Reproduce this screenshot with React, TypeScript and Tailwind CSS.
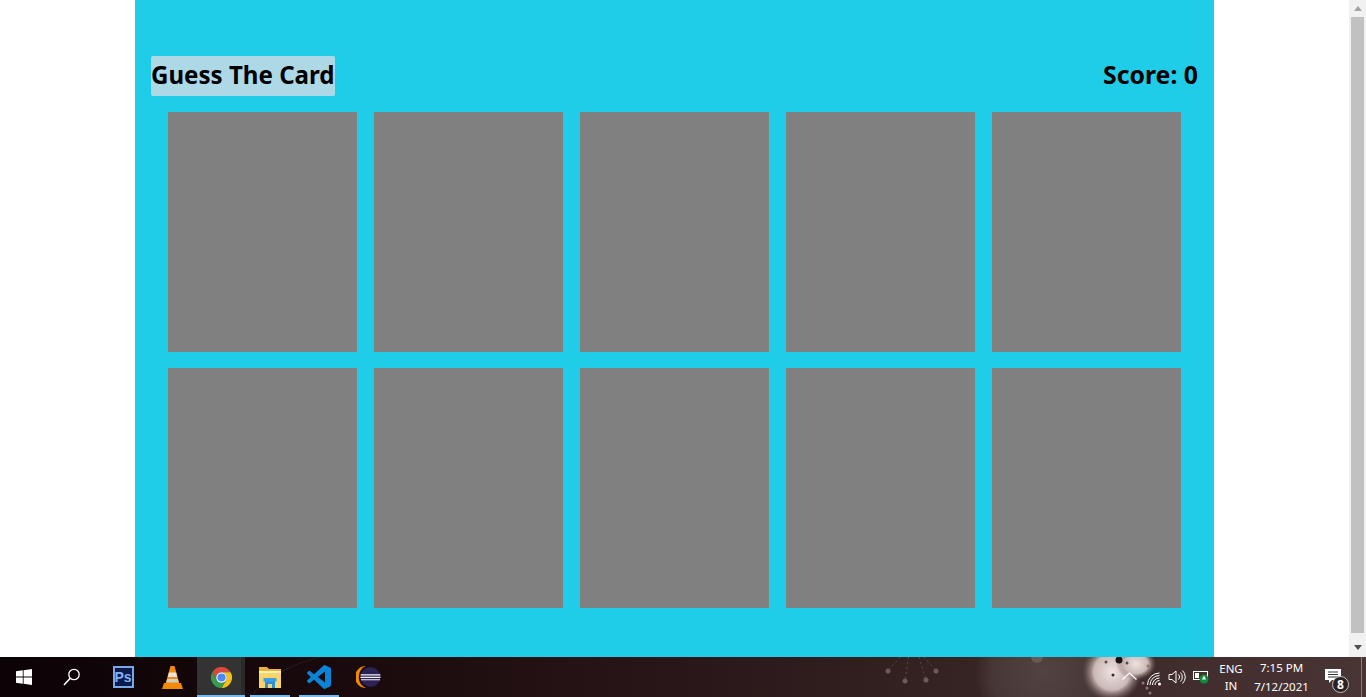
import { Fragment } from "react";

const cards = Array.from({ length: 10 }, (_, i) => i);

function Scrollbar() {
  return (
    <div className="flex w-[17px] shrink-0 flex-col items-center bg-[#f1f1f1]">
      <div className="flex h-[17px] w-full items-center justify-center">
        <div className="h-0 w-0 border-x-[4px] border-b-[5px] border-x-transparent border-b-[#a3a3a3]" />
      </div>
      <div className="h-[616px] w-[13px] bg-[#c1c1c1]" />
      <div className="flex flex-1 items-end">
        <div className="mb-[7px] h-0 w-0 border-x-[4px] border-t-[5px] border-x-transparent border-t-[#505050]" />
      </div>
    </div>
  );
}

function WindowsLogo() {
  return (
    <svg width="16" height="16" viewBox="0 0 16 16" fill="#fff">
      <path d="M0 2.300 6.800 1.300V7.600H0ZM7.600 1.200 16 0V7.600H7.600ZM0 8.400H6.800V14.700L0 13.700ZM7.600 8.400H16V16L7.600 14.800Z" />
    </svg>
  );
}

function SearchIcon() {
  return (
    <svg width="18" height="18" viewBox="0 0 18 18" fill="none" stroke="#fff" strokeWidth="1.300">
      <circle cx="11" cy="6.500" r="5.200" />
      <path d="M7.200 10.300 1 17" strokeWidth="1.600" />
    </svg>
  );
}

function PhotoshopIcon() {
  return (
    <div
      className="flex h-[22px] w-[21px] items-center justify-center border-2 border-[#7aa7e8] bg-[#0a1a4a] text-[14px] font-bold text-[#7fb2f5]"
      style={{ fontFamily: '"Liberation Sans", sans-serif' }}
    >
      Ps
    </div>
  );
}

function VlcIcon() {
  return (
    <svg width="21" height="23" viewBox="0 0 21 23">
      <path d="M2 17h17l2 6H0Z" fill="#f08a00" />
      <path d="M8.500 0h4l5.500 20H3Z" fill="#f58a0a" />
      <path d="M6.900 6.500h7.200l1.200 4.500H5.700Z" fill="#e8e4dc" />
      <path d="M5.200 13h10.600l1 3.500H4.200Z" fill="#d0ccc4" />
    </svg>
  );
}

function ChromeIcon() {
  return (
    <svg width="23" height="23" viewBox="0 0 24 24">
      <path d="M12 1A11 11 0 0 1 21.530 6.500H12A5.500 5.500 0 0 0 7.240 14.750L2.470 6.500A11 11 0 0 1 12 1Z" fill="#d9483b" />
      <path d="M21.530 6.500A11 11 0 0 1 12 23L16.760 14.750A5.500 5.500 0 0 0 12 6.500Z" fill="#f3c01a" />
      <path d="M12 23A11 11 0 0 1 2.470 6.500L7.240 14.750A5.500 5.500 0 0 0 16.760 14.750Z" fill="#3a9a4f" />
      <circle cx="12" cy="12" r="5.500" fill="#fff" />
      <circle cx="12" cy="12" r="4.300" fill="#4a8af4" />
    </svg>
  );
}

function ExplorerIcon() {
  return (
    <svg width="22" height="21" viewBox="0 0 22 21">
      <path d="M0 0h8l2 2h12v4H0Z" fill="#e8b23c" />
      <path d="M0 4h22v17H0Z" fill="#f7d46c" />
      <path d="M0 4h22v2H0Z" fill="#fdf0b4" />
      <path d="M6 14h10v7h-3v-4H9v4H6Z" fill="#2a8fd8" />
      <path d="M4.500 11h13v3.500h-13Z" fill="#3aa0e6" />
    </svg>
  );
}

function VsCodeIcon() {
  return (
    <svg width="24" height="24" viewBox="0 0 24 24" fill="#0a84d6">
      <path d="M23.150 2.587 18.210.21a1.494 1.494 0 0 0-1.705.29l-9.460 8.630-4.120-3.128a.999.999 0 0 0-1.276.057L.327 7.261A1 1 0 0 0 .326 8.740L3.899 12 .326 15.260a1 1 0 0 0 .001 1.479L1.650 17.940a.999.999 0 0 0 1.276.057l4.120-3.128 9.460 8.630a1.492 1.492 0 0 0 1.704.29l4.942-2.377A1.500 1.500 0 0 0 24 20.060V3.939a1.500 1.500 0 0 0-.850-1.352zm-5.146 14.861L10.826 12l7.178-5.448v10.896z" />
    </svg>
  );
}

function EclipseIcon() {
  return (
    <svg width="25" height="24" viewBox="0 0 25 24">
      <path d="M10 1A11 11 0 0 0 10 23 12 12 0 0 1 10 1Z" fill="#f08a00" />
      <circle cx="14.500" cy="12" r="10" fill="#2c2255" />
      <path d="M4.600 9.300h19.800v1.200H4.600ZM4.500 11.800h20v1.200h-20ZM5 14.300h19v1H5Z" fill="#f2f0f7" />
    </svg>
  );
}

function TaskIcon({
  children,
  open,
  active,
}: {
  children: React.ReactNode;
  open?: boolean;
  active?: boolean;
}) {
  return (
    <div
      className={
        active
          ? "relative flex h-10 w-12 items-center justify-center bg-[#333333]"
          : "relative flex h-10 w-12 items-center justify-center"
      }
    >
      {children}
      {active && <div className="absolute inset-y-0 right-0 w-1 bg-[#2a2a2a]" />}
      {open && (
        <div
          className={
            active
              ? "absolute inset-x-0 bottom-0 h-0.5 bg-[#76b9ed]"
              : "absolute inset-x-1 bottom-0 h-0.5 bg-[#76b9ed]"
          }
        />
      )}
    </div>
  );
}

function TaskbarWallpaper() {
  const dots = [
    [888, 671],
    [905, 681],
    [926, 680],
    [936, 671],
  ];
  const beads = [
    [1143, 683],
    [1147, 688],
    [1150, 693],
    [1148, 666],
  ];
  return (
    <svg className="absolute inset-0" width="1366" height="40" viewBox="0 657 1366 40">
      <defs>
        <radialGradient id="petal">
          <stop offset="0" stopColor="#eee3e0" />
          <stop offset="0.6" stopColor="#cbb9b5" />
          <stop offset="1" stopColor="#7a6464" stopOpacity="0" />
        </radialGradient>
        <radialGradient id="glow">
          <stop offset="0" stopColor="#524242" />
          <stop offset="0.75" stopColor="#483737" />
          <stop offset="1" stopColor="#483737" stopOpacity="0" />
        </radialGradient>
      </defs>
      <path d="M250 697 C270 675 290 665 320 657M730 697C760 680 780 670 800 657" stroke="#2c1a1c" fill="none" />
      <circle cx="1045" cy="672" r="70" fill="url(#glow)" />
      <circle cx="1037" cy="657" r="6" fill="#6a5a5a" />
      <ellipse cx="1112" cy="672" rx="30" ry="30" fill="url(#petal)" />
      <ellipse cx="1136" cy="664" rx="20" ry="16" fill="url(#petal)" />
      <circle cx="1119" cy="660" r="3.500" fill="#1c1112" />
      <circle cx="1113" cy="675" r="1.500" fill="#3a2a2a" />
      <circle cx="1106" cy="662" r="1.500" fill="#5a4a4a" />
      <circle cx="1127" cy="663" r="1.500" fill="#5a4a4a" />
      {beads.map(([x, y]) => (
        <circle key={y} cx={x} cy={y} r="1.500" fill="#8a7878" />
      ))}
      {dots.map(([x, y]) => (
        <Fragment key={x}>
          <path d={`M${(x + 912) / 2} 657 ${x} ${y}`} stroke="#5f4a4a" strokeDasharray="2 3" />
          <circle cx={x} cy={y} r="2.500" fill="#6f5a58" />
        </Fragment>
      ))}
    </svg>
  );
}

function Tray() {
  return (
    <div className="relative ml-auto flex h-10 items-center text-white">
      <svg width="15" height="8" viewBox="0 0 15 8" fill="none" stroke="#fff" strokeWidth="1.200" className="mb-[2px] mr-[10px]">
        <path d="M0.500 7.500 7.500 1 14.500 7.500" />
      </svg>
      <svg width="15" height="14" viewBox="0 0 15 14" fill="none" stroke="#fff" strokeWidth="1" className="mt-[3px]">
        <path d="M0.500 13a12 12 0 0 1 12-12M3 13A9.500 9.500 0 0 1 12.500 3.500M5.500 13a7 7 0 0 1 7-7M8 13A4.500 4.500 0 0 1 12.500 8.500" />
        <circle cx="12.500" cy="12" r="1.500" fill="#fff" stroke="none" />
      </svg>
      <svg width="18" height="16" viewBox="0 0 18 16" fill="none" stroke="#fff" strokeWidth="1" className="ml-[6px]">
        <path d="M1 5.500h3L8 2v12L4 10.500H1Z" />
        <path d="M10.500 5.500a3.500 3.500 0 0 1 0 5M12.500 3.500a6.500 6.500 0 0 1 0 9M14.500 1.500a9 9 0 0 1 0 13" />
      </svg>
      <svg width="17" height="14" viewBox="0 0 17 14" className="ml-[7px]">
        <rect x="0.500" y="1.500" width="14" height="8" fill="none" stroke="#fff" />
        <rect x="2" y="3" width="4" height="5" fill="#fff" />
        <circle cx="11" cy="9" r="4.500" fill="#0f8a3c" />
        <path d="M11 5.500 13 9.500h-4Z" fill="#fff" />
      </svg>
      <div className="ml-2 flex w-[26px] flex-col items-center text-[11.500px] leading-[17px]">
        <span>ENG</span>
        <span>IN</span>
      </div>
      <div className="ml-[9px] flex w-[57px] flex-col items-center text-[11.500px] leading-[19px]">
        <span>7:15 PM</span>
        <span>7/12/2021</span>
      </div>
      <div className="relative ml-[15px] h-10 w-6">
        <svg width="16" height="14" viewBox="0 0 16 14" className="absolute left-0 top-3">
          <path d="M0 0h16v11H7l-3 3v-3H0Z" fill="#fff" />
          <path d="M3 3h10M3 5.500h10M3 8h10" stroke="#333" />
        </svg>
        <div className="absolute left-[7px] top-[19px] flex h-[17px] w-[17px] items-center justify-center rounded-full border border-[#c0c0c0] bg-[#2c2224] text-[12px] font-bold">
          8
        </div>
      </div>
      <div className="ml-3 mr-1 h-10 w-px bg-[#8a7a7a]" />
    </div>
  );
}

export default function App() {
  return (
    <div className="flex h-[697px] flex-col overflow-hidden bg-white" style={{ fontFamily: '"Noto Sans", sans-serif' }}>
      <div className="flex h-[657px] shrink-0">
        <div className="flex flex-1 justify-center">
          <div className="w-[1079px] bg-[#1fcde8] px-4 pt-14">
            <div className="flex h-10 items-center justify-between">
              <h1 className="h-10 w-[184px] whitespace-nowrap rounded-[2px] bg-[#add8e6] text-[24.100px] font-bold leading-[38px] text-black">
                Guess The Card
              </h1>
              <div className="h-10 text-[24.800px] font-bold leading-[36px] text-black">Score: 0</div>
            </div>
            <div className="mt-4 grid grid-cols-[repeat(5,189px)] justify-evenly gap-y-4">
              {cards.map((card) => (
                <div key={card} className="h-60 bg-[#808080]" />
              ))}
            </div>
          </div>
        </div>
        <Scrollbar />
      </div>
      <div className="relative flex h-10 shrink-0 items-center bg-gradient-to-r from-[#0b0306] via-[#1d0c0e] via-30% to-[#4a3535]">
        <TaskbarWallpaper />
        <div className="relative flex">
          <TaskIcon>
            <WindowsLogo />
          </TaskIcon>
          <TaskIcon>
            <SearchIcon />
          </TaskIcon>
          <div className="ml-[3px] flex gap-px">
            <TaskIcon>
              <PhotoshopIcon />
            </TaskIcon>
            <TaskIcon>
              <VlcIcon />
            </TaskIcon>
            <TaskIcon open active>
              <ChromeIcon />
            </TaskIcon>
            <TaskIcon open>
              <ExplorerIcon />
            </TaskIcon>
            <TaskIcon open>
              <VsCodeIcon />
            </TaskIcon>
            <TaskIcon>
              <EclipseIcon />
            </TaskIcon>
          </div>
        </div>
        <Tray />
      </div>
    </div>
  );
}
